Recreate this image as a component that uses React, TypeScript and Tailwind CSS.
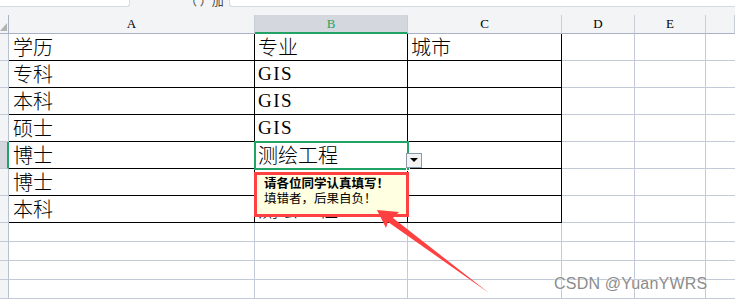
import React from 'react';

const cjk = "font-['SimSun','Noto_Sans_CJK_SC',sans-serif]";
const colLetters = ['A', 'B', 'C', 'D', 'E', ''];

const data: string[][] = [
  ['学历', '专业', '城市'],
  ['专科', 'GIS', ''],
  ['本科', 'GIS', ''],
  ['硕士', 'GIS', ''],
  ['博士', '测绘工程', ''],
  ['博士', '测绘工程', ''],
  ['本科', '测绘工程', ''],
];

const CellText: React.FC<{ text: string }> = ({ text }) => {
  if (!text) return null;
  const latin = /^[A-Za-z]+$/.test(text);
  return latin ? (
    <span className="font-['Liberation_Serif',serif] font-normal text-[19px] tracking-[1.5px] leading-none text-black mb-[4px]">{text}</span>
  ) : (
    <span className={`${cjk} font-light text-[20px] leading-none text-black mb-[3px]`}>{text}</span>
  );
};

export default function App() {
  const emptyRows = 4;

  return (
    <div className="relative w-[735px] h-[299px] overflow-hidden bg-white select-none">
      {/* Sheet tab strip */}
      <div className="h-[15px] bg-[#f3f4f6] flex items-start">
        <div className="w-[130px] h-[7px] bg-white border-b border-r border-[#d5d9e0] rounded-br-[3px]"></div>
        <div className="w-[99px] h-[7px] relative overflow-hidden">
          <span className={`${cjk} absolute left-[55px] -top-[8px] text-[12px] text-[#444]`}>（ ）加</span>
        </div>
        <div className="flex-1 h-[7px] bg-white border-b border-l border-[#d5d9e0] rounded-bl-[3px]"></div>
      </div>

      {/* Grid */}
      <div className="grid grid-cols-[9px_246px_153px_154px_73px_71px_1fr] grid-rows-[19px_repeat(7,27px)_repeat(4,19px)]">
        {/* Header row */}
        <div className="bg-[#f3f4f6] border-r border-b border-[#a9b2c4] flex items-end">
          <svg width="8" height="11" viewBox="0 0 8 11" className="mb-[2px]">
            <polygon points="0,11 7,11 7,3" fill="#b3b3b3" />
          </svg>
        </div>
        {colLetters.map((l, i) => (
          <div
            key={i}
            className={`flex items-center justify-center font-['Liberation_Serif',serif] text-[13px] border-r ${
              i === 1
                ? 'bg-[#d4d7de] text-[#1fa463] border-b-2 border-b-[#21a366] border-r-[#c8ced9]'
                : 'bg-[#f3f4f6] text-black border-b border-b-[#a9b2c4] border-r-[#c8ced9]'
            }`}
          >
            {l}
          </div>
        ))}

        {/* Table rows */}
        {data.map((row, r) => (
          <React.Fragment key={r}>
            <div
              className={`border-r border-b ${
                r === 4 ? 'bg-[#d4d7de] border-r-2 border-r-[#21a366]' : 'bg-[#f3f4f6] border-r-[#b9c0ce]'
              } border-b-[#c3c9d6]`}
            ></div>
            {row.map((txt, c) => (
              <div
                key={c}
                className={`flex items-end overflow-hidden whitespace-nowrap border-r border-b border-black ${c === 0 ? 'pl-[4px]' : 'pl-[3px]'}`}
              >
                <CellText text={txt} />
              </div>
            ))}
            <div className="border-r border-b border-[#c3c9d6]"></div>
            <div className="border-r border-b border-[#c3c9d6]"></div>
            <div className="border-b border-[#c3c9d6]"></div>
          </React.Fragment>
        ))}

        {/* Empty rows */}
        {Array.from({ length: emptyRows }).map((_, r) => (
          <React.Fragment key={`e${r}`}>
            <div className="bg-[#f3f4f6] border-r border-b border-r-[#b9c0ce] border-b-[#c3c9d6]"></div>
            {[0, 1, 2, 3, 4].map(c => (
              <div key={c} className="border-r border-b border-[#c3c9d6]"></div>
            ))}
            <div className="border-b border-[#c3c9d6]"></div>
          </React.Fragment>
        ))}
      </div>

      {/* Active cell outline B5 */}
      <div className="absolute left-[254px] top-[141px] w-[155px] h-[29px] border-2 border-[#21a366] pointer-events-none"></div>
      <div className="absolute left-[406px] top-[167px] w-[4px] h-[4px] bg-[#21a366] border border-white"></div>

      {/* Data validation dropdown button */}
      <div className="absolute left-[406px] top-[153px] w-[16px] h-[15px] bg-[#f2f2f2] border border-[#8a98ab] flex items-center justify-center">
        <svg width="8" height="5" viewBox="0 0 8 5">
          <polygon points="0,0 8,0 4,4" fill="#000" />
        </svg>
      </div>

      {/* Input message tooltip */}
      <div className="absolute left-[254px] top-[172px] w-[155px] h-[45px] bg-[#ffffe1] border-[3px] border-[#ff4141] pl-[7px] pt-0">
        <div className={`${cjk} text-[12.5px] font-bold leading-[15px] text-black whitespace-nowrap`}>请各位同学认真填写！</div>
        <div className={`${cjk} text-[12.5px] leading-[16px] text-black whitespace-nowrap`}>填错者，后果自负！</div>
      </div>

      {/* Red annotation arrow */}
      <svg className="absolute inset-0 pointer-events-none" width="735" height="299" viewBox="0 0 735 299">
        <polygon points="377,210 399,212 393,218 489,293 388,222 386,228" fill="#ff4040" />
      </svg>

      {/* Watermark */}
      <div className="absolute left-[554px] top-[272px] font-['Liberation_Sans',Arial,sans-serif] text-[16px] text-[#8c8c8c] tracking-[0.2px] [text-shadow:0_0_2px_#fff,0_0_1px_#fff]">
        CSDN @YuanYWRS
      </div>
    </div>
  );
}
